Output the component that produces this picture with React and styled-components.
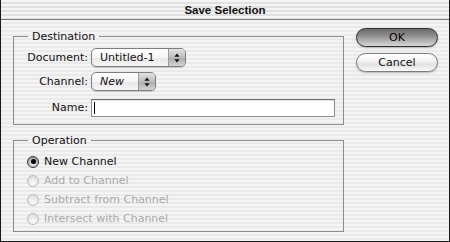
import React from "react"
import styled, { createGlobalStyle, css } from "styled-components"

const Global = createGlobalStyle`
  html, body {
    margin: 0;
    padding: 0;
    background: #fff;
  }
  body {
    font-family: "DejaVu Sans", "Lucida Grande", sans-serif;
    font-size: 11px;
    color: #111;
  }
`

const stripes = (a, b) => css`
  background: repeating-linear-gradient(
    to bottom,
    ${a} 0px,
    ${a} 2px,
    ${b} 2px,
    ${b} 4px
  );
`

const Window = styled.div`
  width: 450px;
  height: 242px;
  box-sizing: border-box;
  border: 1px solid #1a1a1a;
  border-top: none;
  display: flex;
  flex-direction: column;
  ${stripes("#f4f4f4", "#eaeaea")}
`

const TitleBar = styled.div`
  height: 19px;
  flex: none;
  display: flex;
  align-items: center;
  justify-content: center;
  border-bottom: 1px solid #7a7a7a;
  ${stripes("#f4f4f4", "#e0e0e0")}
`

const Title = styled.span`
  font-family: "Liberation Sans", Arial, sans-serif;
  font-weight: bold;
  font-size: 11.5px;
  color: #111;
  margin-top: 1px;
`

const Body = styled.div`
  flex: 1;
  display: flex;
  padding: 0 11px 0 12px;
  gap: 12px;
`

const LeftCol = styled.div`
  width: 331px;
  display: flex;
  flex-direction: column;
  padding-top: 10px;
  gap: 9px;
`

const Group = styled.fieldset`
  margin: 0;
  border: 1px solid #8c8c8c;
  padding: 0 7px ${p => p.$bottom}px 0;
  display: flex;
  flex-direction: column;
  gap: ${p => p.$gap}px;
  min-width: 0;
`

const Legend = styled.legend`
  margin-left: 14px;
  padding: 0 4px;
  line-height: 13px;
  color: #111;
`

const Row = styled.div`
  display: flex;
  align-items: center;
  height: ${p => p.$h}px;
`

const Label = styled.label`
  width: 74px;
  text-align: right;
  padding-right: 3px;
  flex: none;
`

const Popup = styled.div`
  width: ${p => p.$w}px;
  height: 19px;
  box-sizing: border-box;
  border: 1px solid #7e7e7e;
  border-radius: 5px;
  display: flex;
  overflow: hidden;
  background: linear-gradient(to bottom, #ffffff 0%, #f4f4f4 50%, #e6e6e6 51%, #f6f6f6 100%);
  box-shadow: 0 1px 1px rgba(0, 0, 0, 0.15);
`

const PopupText = styled.span`
  flex: 1;
  padding-left: 8px;
  line-height: 17px;
  font-style: ${p => (p.$italic ? "italic" : "normal")};
`

const PopupArrows = styled.span`
  width: 16px;
  flex: none;
  display: flex;
  align-items: center;
  justify-content: center;
  border-left: 1px solid #9a9a9a;
  background: linear-gradient(to bottom, #e2e2e2 0%, #bdbdbd 50%, #aaaaaa 51%, #d4d4d4 100%);
`

const TextField = styled.div`
  width: 244px;
  height: 18px;
  box-sizing: border-box;
  border: 1px solid #8e8e8e;
  border-top-color: #6e6e6e;
  background: #fff;
  box-shadow: inset 0 1px 1px rgba(0, 0, 0, 0.12);
  display: flex;
  align-items: center;
  padding-left: 2px;
`

const Caret = styled.span`
  width: 1px;
  height: 12px;
  background: #000;
`

const Spacer = styled.div`
  height: ${p => p.$h}px;
  flex: none;
`

const RadioRow = styled.div`
  display: flex;
  align-items: center;
  height: 19px;
  padding-left: 13px;
  gap: 5px;
  color: ${p => (p.$disabled ? "#ababab" : "#111")};
`

const RadioDot = styled.span`
  width: 12px;
  height: 12px;
  box-sizing: border-box;
  border-radius: 50%;
  flex: none;
  display: flex;
  align-items: center;
  justify-content: center;
  ${p =>
    p.$checked
      ? css`
          border: 1px solid #3a3a3a;
          background: radial-gradient(circle at 50% 70%, #f0f0f0 0%, #9a9a9a 80%);
          &::after {
            content: "";
            width: 5px;
            height: 5px;
            border-radius: 50%;
            background: #000;
          }
        `
      : css`
          border: 1px solid #bdbdbd;
          background: radial-gradient(circle at 50% 70%, #fafafa 0%, #dcdcdc 85%);
        `}
`

const RightCol = styled.div`
  width: 82px;
  display: flex;
  flex-direction: column;
  padding-top: 8px;
  gap: 6px;
`

const Button = styled.div`
  height: 19px;
  box-sizing: border-box;
  border-radius: 10px;
  display: flex;
  align-items: center;
  justify-content: center;
  ${p =>
    p.$default
      ? css`
          border: 1px solid #2e2e2e;
          background: linear-gradient(to bottom, #6c6c6c 0%, #8e8e8e 40%, #a8a8a8 60%, #d8d8d8 100%);
          color: #050505;
        `
      : css`
          border: 1px solid #7c7c7c;
          background: linear-gradient(to bottom, #ffffff 0%, #f2f2f2 45%, #e0e0e0 60%, #fafafa 100%);
          color: #111;
        `}
  box-shadow: 0 1px 2px rgba(0, 0, 0, 0.25);
`

const UpDown = () => (
  <svg width="6" height="10" viewBox="0 0 6 10">
    <path d="M3 0.5 L5.6 3.8 L0.4 3.8 Z" fill="#111" />
    <path d="M3 9.5 L5.6 6.2 L0.4 6.2 Z" fill="#111" />
  </svg>
)

const operations = [
  { label: "New Channel", checked: true },
  { label: "Add to Channel", disabled: true },
  { label: "Subtract from Channel", disabled: true },
  { label: "Intersect with Channel", disabled: true },
]

export default function App() {
  return (
    <>
      <Global />
      <Window>
        <TitleBar>
          <Title>Save Selection</Title>
        </TitleBar>
        <Body>
          <LeftCol>
            <Group $gap={5} $bottom={7}>
              <Legend>Destination</Legend>
              <Spacer $h={0} />
              <Row $h={19}>
                <Label>Document:</Label>
                <Popup $w={95}>
                  <PopupText>Untitled-1</PopupText>
                  <PopupArrows><UpDown /></PopupArrows>
                </Popup>
              </Row>
              <Row $h={19}>
                <Label>Channel:</Label>
                <Popup $w={65}>
                  <PopupText $italic>New</PopupText>
                  <PopupArrows><UpDown /></PopupArrows>
                </Popup>
              </Row>
              <Spacer $h={0} />
              <Row $h={19} style={{ marginTop: -3 }}>
                <Label>Name:</Label>
                <TextField><Caret /></TextField>
              </Row>
            </Group>
            <Group $gap={0} $bottom={3}>
              <Legend>Operation</Legend>
              <Spacer $h={5} />
              {operations.map(op => (
                <RadioRow key={op.label} $disabled={op.disabled}>
                  <RadioDot $checked={op.checked} />
                  <span>{op.label}</span>
                </RadioRow>
              ))}
            </Group>
          </LeftCol>
          <RightCol>
            <Button $default>OK</Button>
            <Button>Cancel</Button>
          </RightCol>
        </Body>
      </Window>
    </>
  )
}
